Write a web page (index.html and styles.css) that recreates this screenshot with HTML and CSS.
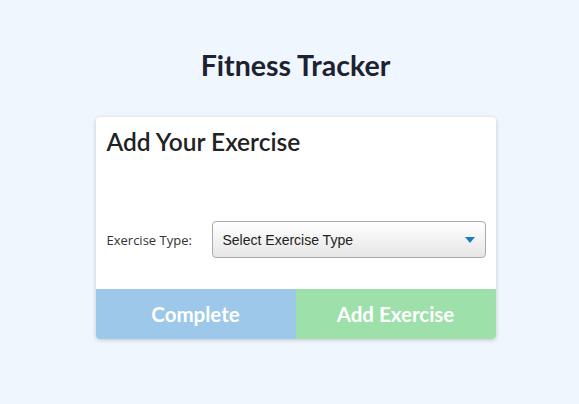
FILE: index.html
```html
<!DOCTYPE html>
<html>
<head>
<meta charset="utf-8">
<link rel="stylesheet" href="styles.css">
</head>
<body>
<main class="page">
  <h1 class="title">Fitness Tracker</h1>
  <section class="card">
    <div class="card-body">
      <h2 class="card-title">Add Your Exercise</h2>
      <div class="field">
        <label class="label">Exercise Type:</label>
        <div class="select">
          <span>Select Exercise Type</span>
          <svg class="arrow" width="10" height="6" viewBox="0 0 10 6"><path d="M0 0H10L5 6Z" fill="#1a7fb8"/></svg>
        </div>
      </div>
    </div>
    <div class="actions">
      <button class="btn btn-complete">Complete</button>
      <button class="btn btn-add">Add Exercise</button>
    </div>
  </section>
</main>
</body>
</html>
```
FILE: styles.css
```css
html, body {
  margin: 0;
  padding: 0;
  background: #eff6fe;
  height: 100%;
}
.page {
  display: flex;
  flex-direction: column;
  align-items: center;
  padding-top: 45px;
  padding-left: 12px;
  font-family: Lato, "Open Sans", sans-serif;
}
.title {
  margin: 0 0 32px;
  font-size: 28.5px;
  font-weight: 700;
  color: #1c2230;
  line-height: 40px;
}
.card {
  width: 400px;
  background: #fff;
  border-radius: 4px;
  box-shadow: 0 1px 4px rgba(0,0,0,0.2);
  overflow: hidden;
}
.card-body {
  padding: 11px 10px 31px 11px;
}
.card-title {
  margin: 0;
  font-size: 24.5px;
  font-weight: 600;
  color: #222;
  line-height: 28px;
}
.field {
  display: flex;
  align-items: center;
  margin-top: 65px;
}
.label {
  width: 105px;
  font-family: "Open Sans", sans-serif;
  font-size: 13px;
  color: #333;
}
.select {
  flex: 1;
  height: 35px;
  border: 1px solid #aaa;
  border-radius: 4px;
  background: linear-gradient(#fff, #e6e6e6);
  display: flex;
  align-items: center;
  justify-content: space-between;
  padding: 0 10px 0 10px;
  font-family: "Liberation Sans", Arial, sans-serif;
  font-size: 14px;
  color: #222;
}
.actions {
  display: flex;
}
.btn {
  flex: 1;
  height: 50px;
  border: 0;
  margin: 0;
  color: #fff;
  font-family: Lato, sans-serif;
  font-weight: 700;
  font-size: 20.5px;
}
.btn-complete { background: #9dc8e9; }
.btn-add { background: #9de0aa; }
```
